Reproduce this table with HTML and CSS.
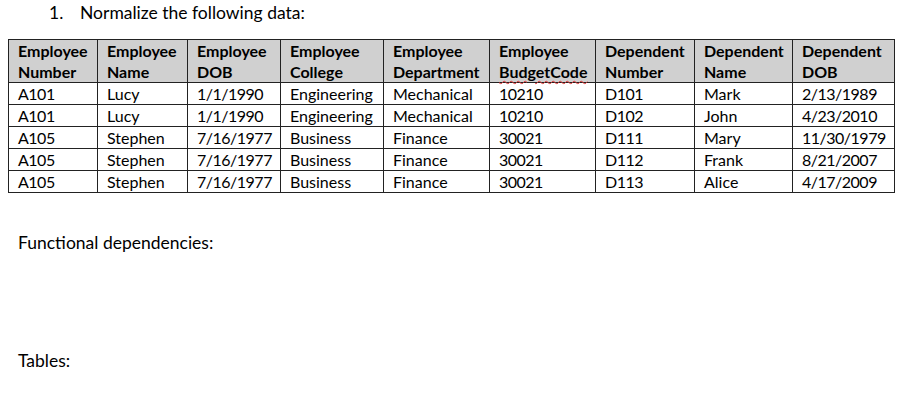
FILE: index.html
```html
<!DOCTYPE html>
<html>
<head>
<meta charset="utf-8">
<link rel="stylesheet" href="styles.css">
</head>
<body>
<div class="page">
  <p class="title"><span class="num">1.</span><span>Normalize the following data:</span></p>
  <table class="data">
    <colgroup>
      <col class="c1"><col class="c2"><col class="c3"><col class="c4"><col class="c5"><col class="c6"><col class="c7"><col class="c8"><col class="c9">
    </colgroup>
    <thead>
      <tr>
        <th>Employee<br>Number</th>
        <th>Employee<br>Name</th>
        <th>Employee<br>DOB</th>
        <th>Employee<br>College</th>
        <th>Employee<br>Department</th>
        <th>Employee<br><span class="spell">BudgetCode</span></th>
        <th>Dependent<br>Number</th>
        <th>Dependent<br>Name</th>
        <th>Dependent<br>DOB</th>
      </tr>
    </thead>
    <tbody>
      <tr><td class="n">A101</td><td>Lucy</td><td class="n">1/1/1990</td><td>Engineering</td><td>Mechanical</td><td class="n">10210</td><td class="n">D101</td><td>Mark</td><td class="n">2/13/1989</td></tr>
      <tr><td class="n">A101</td><td>Lucy</td><td class="n">1/1/1990</td><td>Engineering</td><td>Mechanical</td><td class="n">10210</td><td class="n">D102</td><td>John</td><td class="n">4/23/2010</td></tr>
      <tr><td class="n">A105</td><td>Stephen</td><td class="n">7/16/1977</td><td>Business</td><td>Finance</td><td class="n">30021</td><td class="n">D111</td><td>Mary</td><td class="n">11/30/1979</td></tr>
      <tr><td class="n">A105</td><td>Stephen</td><td class="n">7/16/1977</td><td>Business</td><td>Finance</td><td class="n">30021</td><td class="n">D112</td><td>Frank</td><td class="n">8/21/2007</td></tr>
      <tr><td class="n">A105</td><td>Stephen</td><td class="n">7/16/1977</td><td>Business</td><td>Finance</td><td class="n">30021</td><td class="n">D113</td><td>Alice</td><td class="n">4/17/2009</td></tr>
    </tbody>
  </table>
  <p class="label fd">Functional dependencies:</p>
  <p class="label tables">Tables:</p>
</div>
</body>
</html>
```
FILE: styles.css
```css
html, body {
  margin: 0;
  padding: 0;
  background: #ffffff;
}
body {
  font-family: Lato, "Open Sans", sans-serif;
  color: #000000;
  font-size: 16px;
}
.page {
  width: 919px;
  height: 406px;
  overflow: hidden;
}
.title {
  margin: 0;
  padding: 2px 0 0 49px;
  font-size: 17.5px;
  line-height: 22px;
  display: flex;
}
.title .num {
  width: 31px;
}
.data {
  margin: 15px 0 0 8px;
  border-collapse: collapse;
  table-layout: fixed;
  width: 887px;
  font-size: 16px;
}
.c1 { width: 89px; }
.c2 { width: 90px; }
.c3 { width: 93px; }
.c4 { width: 103px; }
.c5 { width: 106px; }
.c6 { width: 106px; }
.c7 { width: 99px; }
.c8 { width: 98px; }
.c9 { width: 102px; }
.data th, .data td {
  border: 1px solid #222222;
  text-align: left;
  padding: 0 0 0 9px;
  white-space: nowrap;
  line-height: 21px;
  height: 21px;
}
.data td.n {
  letter-spacing: -0.5px;
}
.data th {
  background: #d0d0d0;
  font-weight: 700;
  line-height: 20.5px;
  padding-top: 1px;
}
.spell {
  text-decoration: underline wavy #d33;
  text-decoration-thickness: 1px;
  text-underline-offset: 2px;
}
.label {
  margin: 0;
  padding-left: 18px;
  font-size: 17.5px;
  line-height: 22px;
}
.fd {
  margin-top: 39px;
}
.tables {
  margin-top: 96px;
}
```
